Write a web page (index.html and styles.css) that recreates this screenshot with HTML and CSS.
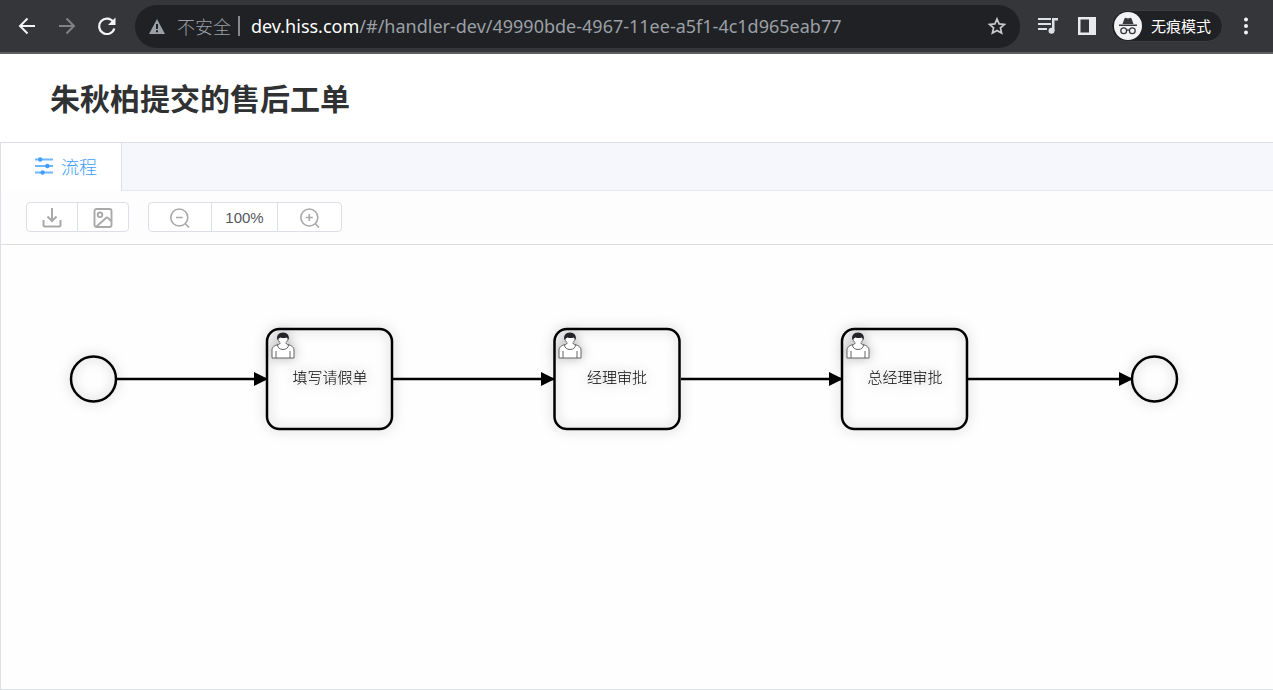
FILE: index.html
```
<!DOCTYPE html>
<html lang="zh-CN">
<head>
<meta charset="utf-8">
<meta name="viewport" content="width=device-width, initial-scale=1">
<title>朱秋柏提交的售后工单</title>
<link rel="stylesheet" href="styles.css">
</head>
<body>
<header class="browser">
  <nav class="browser-nav" aria-label="浏览器导航">
    <button class="icon-button" aria-label="后退">
      <svg width="18" height="18" viewBox="0 0 18 18" fill="none" stroke="#f1f3f4" stroke-width="2"><path d="M17 9H2M9.500 1.500 2 9l7.500 7.500"/></svg>
    </button>
    <button class="icon-button" aria-label="前进">
      <svg width="18" height="18" viewBox="0 0 18 18" fill="none" stroke="#808286" stroke-width="2"><path d="M1 9h15M8.500 1.500 16 9l-7.500 7.500"/></svg>
    </button>
    <button class="icon-button" aria-label="刷新">
      <svg width="18" height="18" viewBox="0 0 18 18"><path d="M15.300 5A7.700 7.700 0 1 0 16.300 11.500" fill="none" stroke="#f1f3f4" stroke-width="2.200"/><path d="M17.500 0.500v7.500H10z" fill="#f1f3f4"/></svg>
    </button>
  </nav>
  <div class="address">
    <svg width="16" height="15" viewBox="0 0 16 15"><path d="M8 0l8 15H0z" fill="#9aa0a6"/><path d="M8 5v5M8 11.300v2" stroke="#202124" stroke-width="2"/></svg>
    <span class="insecure">不安全</span>
    <span class="address-rule"></span>
    <span class="url"><span class="url-host">dev.hiss.com</span>/#/handler-dev/49990bde-4967-11ee-a5f1-4c1d965eab77</span>
    <button class="icon-button star" aria-label="收藏">
      <svg width="18" height="18" viewBox="0 0 18 18" fill="none" stroke="#c8cacd" stroke-width="1.700"><path d="M9 2l2.100 4.900 5.300.5-4 3.500 1.200 5.200L9 13.400l-4.600 2.700 1.200-5.200-4-3.500 5.300-.5z"/></svg>
    </button>
  </div>
  <div class="browser-tools">
    <button class="icon-button" aria-label="媒体控制">
      <svg width="20" height="16" viewBox="0 0 20 16" fill="#dee1e6"><path d="M0 0h13v2H0zM0 5h13v2H0zM0 10h9v2H0zM14 0h6v2.500h-3.500V13H14z"/><circle cx="13.500" cy="12.800" r="3"/></svg>
    </button>
    <button class="icon-button" aria-label="侧边栏">
      <svg width="18" height="18" viewBox="0 0 18 18"><path d="M0 0h18v18H0zM2.500 2.500v13H11v-13z" fill="#e8eaed" fill-rule="evenodd"/></svg>
    </button>
    <button class="incognito">
      <svg width="28" height="28" viewBox="0 0 28 28"><circle cx="14" cy="14" r="14" fill="#f1f3f4"/><path d="M8.500 12l2-5.500q.5-1 1.500-.6l2 .6 2-.6q1-.4 1.500.6l2 5.500zM5 12.500h18V14H5z" fill="#36373b"/><g fill="none" stroke="#36373b" stroke-width="1.300"><circle cx="9.700" cy="18.700" r="2.900"/><circle cx="18.300" cy="18.700" r="2.900"/><path d="M12.600 18.300q1.400-1 2.800 0"/></g></svg>
      <span>无痕模式</span>
    </button>
    <button class="icon-button" aria-label="更多">
      <svg width="6" height="18" viewBox="0 0 6 18" fill="#f1f3f4"><circle cx="3" cy="2.500" r="2"/><circle cx="3" cy="9" r="2"/><circle cx="3" cy="15.500" r="2"/></svg>
    </button>
  </div>
</header>

<main class="page">
  <h1 class="title">朱秋柏提交的售后工单</h1>
  <section class="panel">
    <div class="tabs" role="tablist">
      <button class="tab" role="tab" aria-selected="true">
        <svg width="18" height="18" viewBox="0 0 18 18" fill="#409eff"><g opacity=".75"><path d="M0 1.500h18v2H0zM0 8h18v2H0zM0 14.500h18v2H0z"/></g><circle cx="5.200" cy="2.500" r="2.200"/><circle cx="12.400" cy="9" r="2.200"/><circle cx="7.600" cy="15.500" r="2.200"/></svg>
        <span>流程</span>
      </button>
    </div>
    <div class="toolbar">
      <div class="group">
        <button class="tool tool-file" aria-label="下载">
          <svg width="20" height="20" viewBox="0 0 20 20" fill="none" stroke="#a9a9a9" stroke-width="2"><path d="M1.500 12v5q0 1.500 1.500 1.500h14q1.500 0 1.500-1.500v-5M10 0v13M5.500 8.500 10 13l4.500-4.500"/></svg>
        </button>
        <button class="tool tool-file" aria-label="导出图片">
          <svg width="20" height="20" viewBox="0 0 20 20" fill="none" stroke="#a9a9a9" stroke-width="1.900"><rect x="1.500" y="1" width="17" height="18" rx="2"/><circle cx="7" cy="6.800" r="2.300"/><path d="M3.500 18.500 13 10q1-.8 2 0l3.500 3.200"/></svg>
        </button>
      </div>
      <div class="group">
        <button class="tool tool-zoom" aria-label="缩小">
          <svg width="20" height="20" viewBox="0 0 20 20" fill="none" stroke="#a9a9a9" stroke-width="1.600"><circle cx="9.300" cy="9.500" r="8.500"/><path d="M6 9.500h6.600M15.300 15.800l3.700 3.700"/></svg>
        </button>
        <button class="tool tool-scale">100%</button>
        <button class="tool tool-zoom" aria-label="放大">
          <svg width="20" height="20" viewBox="0 0 20 20" fill="none" stroke="#a9a9a9" stroke-width="1.600"><circle cx="9.300" cy="9.500" r="8.500"/><path d="M5.800 9.500h7M9.300 6v7M15.300 15.800l3.700 3.700"/></svg>
        </button>
      </div>
    </div>
    <div class="canvas">
      <svg class="diagram" role="img" aria-label="流程图">
        <defs>
          <marker id="arrow" viewBox="0 0 14 14" refX="14" refY="7" markerWidth="14" markerHeight="14" markerUnits="userSpaceOnUse" orient="auto"><path d="M0 0 14 7 0 14z"/></marker>
          <g id="user">
            <path d="M7.500 13.500C3 14.500 1 16.500 1 19v8h22v-8c0-2.500-2-4.500-6.500-5.500L14.500 12V9h-5v3z" fill="#fff" stroke="#555" stroke-width=".9"/>
            <path d="M6.500 13.800c0 3 2.500 4.700 5.500 4.700s5.500-1.700 5.500-4.700M5 27v-7M19 27v-7" fill="none" stroke="#555" stroke-width=".9"/>
            <circle cx="12" cy="7.500" r="5" fill="#fff" stroke="#555" stroke-width=".8"/>
            <path d="M6.500 9C5 4.500 8 1.500 12 1.500S19 4.500 17.500 9q-.5-2-2-2.500-3 1-6 0-2 .5-3 2.500z" fill="#22242a"/>
            <path d="M9 10.500q0 1 1 2v2.500h4v-2.500q1-1 1-2z" fill="#fff"/>
          </g>
        </defs>
        <g class="flows">
          <path d="M115 134H267"/><path d="M392 134H554"/><path d="M680 134H842"/><path d="M967 134H1132"/>
        </g>
        <g class="node"><circle cx="92.500" cy="134" r="22.500"/></g>
        <g class="node"><rect x="266" y="84" width="125" height="100" rx="12.500"/><use href="#user" x="270" y="86"/><text x="329" y="138">填写请假单</text></g>
        <g class="node"><rect x="553.500" y="84" width="125" height="100" rx="12.500"/><use href="#user" x="557" y="86"/><text x="616" y="138">经理审批</text></g>
        <g class="node"><rect x="841" y="84" width="125" height="100" rx="12.500"/><use href="#user" x="845" y="86"/><text x="904" y="138">总经理审批</text></g>
        <g class="node"><circle cx="1153.500" cy="134" r="22.500"/></g>
      </svg>
    </div>
  </section>
</main>
</body>
</html>
```
FILE: styles.css
```
* { box-sizing: border-box; }

body {
  display: flex;
  flex-direction: column;
  min-height: 100vh;
  margin: 0;
  background: #fff;
  color: #303133;
  font-family: "Noto Sans", "Noto Sans CJK SC", sans-serif;
}

button {
  display: flex;
  align-items: center;
  justify-content: center;
  padding: 0;
  border: 0;
  background: none;
  color: inherit;
  font: inherit;
}

svg { display: block; flex-shrink: 0; }

.browser {
  display: flex;
  align-items: center;
  height: 54px;
  padding: 0 24px 0 18px;
  border-bottom: 2px solid #5f6064;
  background: #35363a;
}

.browser-nav { display: flex; gap: 22px; }

.address {
  display: flex;
  flex: 1;
  align-items: center;
  height: 43px;
  margin-left: 19px;
  padding: 0 14px;
  border-radius: 22px;
  background: #202124;
  color: #9aa0a6;
  font-family: "Noto Sans", "Noto Sans CJK SC", sans-serif;
  font-size: 18px;
  line-height: 24px;
  white-space: nowrap;
}

.insecure {
  margin-left: 12px;
  font-family: "Noto Sans CJK SC", sans-serif;
  font-weight: 300;
}

.address-rule {
  width: 2px;
  height: 20px;
  margin: 0 11px 0 7px;
  background: #85888c;
}

.url-host { color: #fff; }
.star { margin-left: auto; }

.browser-tools {
  display: flex;
  align-items: center;
  gap: 20px;
  margin-left: 18px;
}

.incognito {
  gap: 9px;
  height: 32px;
  margin-left: -5px;
  padding: 0 11px 0 2px;
  border: 1px solid #3c3d41;
  border-radius: 16px;
  background: #202124;
  color: #fff;
  font-family: "Noto Sans CJK SC", sans-serif;
  font-size: 15px;
  line-height: 24px;
}

.page {
  display: flex;
  flex: 1;
  flex-direction: column;
}

.title {
  margin: 0;
  padding: 25px 50px 23px;
  font-size: 30px;
  line-height: 40px;
}

.panel {
  display: flex;
  flex: 1;
  flex-direction: column;
  border: solid #dcdfe6;
  border-width: 1px 0 1px 1px;
}

.tabs {
  display: flex;
  height: 48px;
  background: linear-gradient(#e4e7ed, #e4e7ed) bottom / 100% 1px no-repeat #f5f7fc;
}

.tab {
  gap: 8px;
  padding: 0 24px 2px 34px;
  border-right: 1px solid #dcdfe6;
  background: #fff;
  color: #409eff;
  font-family: "Noto Sans CJK SC", sans-serif;
  font-size: 18px;
  font-weight: 300;
  line-height: 24px;
}

.toolbar {
  display: flex;
  align-items: center;
  gap: 19px;
  height: 54px;
  padding: 0 25px 2px;
  border-bottom: 1px solid #dcdde1;
  background: #fdfdfd;
}

.group {
  display: flex;
  height: 30px;
  border: 1px solid #dcdfe6;
  border-radius: 4px;
  background: #fff;
}

.tool { padding-top: 2px; }
.tool + .tool { border-left: 1px solid #dcdfe6; }
.tool-file { width: 50px; }
.tool-file + .tool-file { width: 51px; }
.tool-zoom { width: 62px; }
.tool-scale + .tool-zoom { width: 64px; }

.tool-scale {
  width: 66px;
  color: #55575c;
  font-family: "Liberation Sans", sans-serif;
  font-size: 15px;
}

.canvas {
  display: flex;
  flex: 1;
  background: #fefefe;
}

.diagram { flex: 1; min-height: 240px; }

.flows path {
  fill: none;
  stroke: #000;
  stroke-width: 2.500px;
  marker-end: url(#arrow);
}

.node { filter: drop-shadow(0 0 6px rgba(0, 0, 0, 0.3)); }

.node > circle,
.node > rect {
  fill: none;
  stroke: #000;
  stroke-width: 2.500px;
}

.node text {
  fill: #000;
  font-family: "Noto Sans CJK SC", sans-serif;
  font-size: 15px;
  font-weight: 300;
  text-anchor: middle;
}
```
